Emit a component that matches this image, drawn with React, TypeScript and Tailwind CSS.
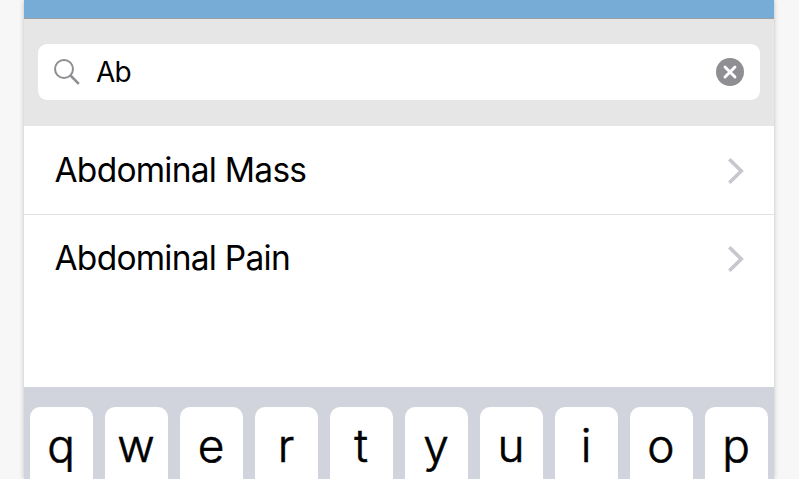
const LETTERS = ["q", "w", "e", "r", "t", "y", "u", "i", "o", "p"];

function SearchIcon() {
  return (
    <svg width="28" height="28" viewBox="0 0 28 28" fill="none" stroke="#8e8e93">
      <circle cx="11" cy="11" r="9" strokeWidth="2" />
      <path d="M17.5 17.5L25.8 25.8" strokeWidth="2.6" />
    </svg>
  );
}

function ClearIcon() {
  return (
    <svg width="28" height="28" viewBox="0 0 28 28" fill="none">
      <circle cx="14" cy="14" r="14" fill="#8e8e93" />
      <path d="M9 9L19 19M19 9L9 19" stroke="#fff" strokeWidth="2.9" strokeLinecap="round" />
    </svg>
  );
}

function Chevron() {
  return (
    <svg width="16" height="26" viewBox="0 0 16 26" fill="none" stroke="#c7c7cc">
      <path d="M1.3 1.3L13.3 13L1.3 24.7" strokeWidth="3.6" />
    </svg>
  );
}

function Row({ label }: { label: string }) {
  return (
    <li className="flex h-[88px] items-center justify-between pt-px pr-[30px] pl-[30.5px]">
      <span className="pb-px text-[33.5px] leading-[40px] tracking-[-0.75px]">{label}</span>
      <Chevron />
    </li>
  );
}

export default function App() {
  return (
    <div className="h-[479px] w-[799px] overflow-hidden bg-[#f7f7f7] font-['Inter',sans-serif] text-black">
      <main className="ml-6 flex h-[479px] w-[750px] flex-col bg-white shadow-[0_0_5px_rgba(0,0,0,0.22)]">
        <header className="h-[19px] shrink-0 border-b border-[#a0a0a0] bg-[#76acd6]" />
        <div className="h-[107px] shrink-0 bg-[#e6e6e6] px-[14px] pt-[25px]">
          <div className="flex h-14 items-center rounded-[9px] bg-white pr-4 pl-[15px]">
            <SearchIcon />
            <span className="ml-[15px] grow text-[28px] leading-8 tracking-[-0.8px]">Ab</span>
            <ClearIcon />
          </div>
        </div>
        <ul className="grow bg-[linear-gradient(#e3e3e3,#e3e3e3)] bg-[length:100%_1px] bg-[position:0_88px] bg-no-repeat">
          <Row label="Abdominal Mass" />
          <Row label="Abdominal Pain" />
        </ul>
        <div className="flex h-[92px] shrink-0 gap-3 overflow-hidden bg-[#d1d4dc] px-[6px] pt-5">
          {LETTERS.map((letter) => (
            <div
              key={letter}
              className="flex h-[84px] w-[63px] shrink-0 justify-center rounded-[10px] bg-white pt-[9px] pr-px text-[46px] leading-[58px] font-light [-webkit-text-stroke:0.6px_black]"
            >
              {letter}
            </div>
          ))}
        </div>
      </main>
    </div>
  );
}
